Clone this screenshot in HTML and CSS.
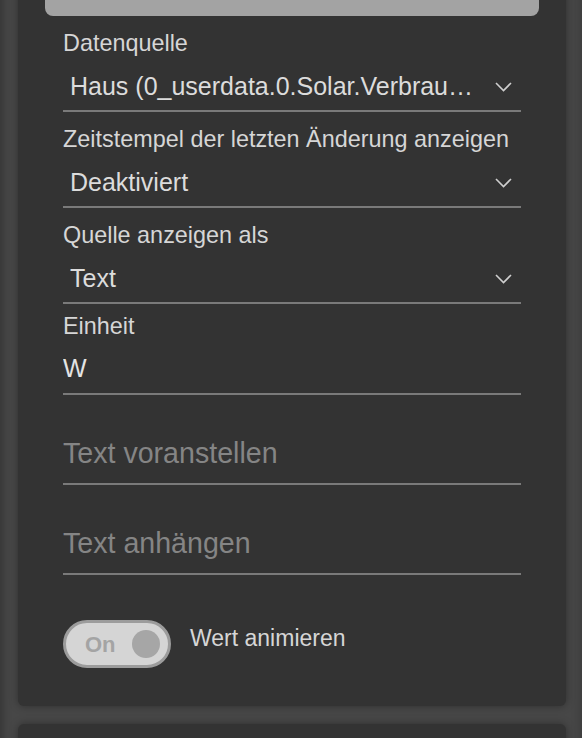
FILE: index.html
```html
<!DOCTYPE html>
<html lang="de">
<head>
    <meta charset="UTF-8">
    <meta name="viewport" content="width=device-width, initial-scale=1.0">
    <title>Widget Einstellungen</title>
    <link rel="stylesheet" href="styles.css">
</head>
<body>
<div class="panel">
    <div class="card">
        <button class="top-btn">Optionen</button>
        <div class="form">
            <div class="field">
                <label>Datenquelle</label>
                <div class="select">
                    <span class="value">Haus (0_userdata.0.Solar.Verbrauch.Haus)</span>
                    <svg class="chevron" width="17" height="10" viewBox="0 0 17 10"><path d="M1 1 L8.5 8.5 L16 1" fill="none" stroke="#cfcfcf" stroke-width="1.6"/></svg>
                </div>
            </div>
            <div class="field">
                <label>Zeitstempel der letzten Änderung anzeigen</label>
                <div class="select">
                    <span class="value">Deaktiviert</span>
                    <svg class="chevron" width="17" height="10" viewBox="0 0 17 10"><path d="M1 1 L8.5 8.5 L16 1" fill="none" stroke="#cfcfcf" stroke-width="1.6"/></svg>
                </div>
            </div>
            <div class="field">
                <label>Quelle anzeigen als</label>
                <div class="select">
                    <span class="value">Text</span>
                    <svg class="chevron" width="17" height="10" viewBox="0 0 17 10"><path d="M1 1 L8.5 8.5 L16 1" fill="none" stroke="#cfcfcf" stroke-width="1.6"/></svg>
                </div>
            </div>
            <div class="field field-text">
                <label>Einheit</label>
                <div class="input"><span class="value">W</span></div>
            </div>
            <div class="input input-empty"><span class="placeholder">Text voranstellen</span></div>
            <div class="input input-empty"><span class="placeholder">Text anhängen</span></div>

            <div class="switch-row">
                <div class="switch">
                    <span class="switch-text">On</span>
                    <span class="knob"></span>
                </div>
                <span class="switch-label">Wert animieren</span>
            </div>
        </div>
    </div>
    <div class="card card-next"></div>
</div>
</body>
</html>
```

FILE: styles.css
```css
body {
    margin: 0;
    background-color: #474747;
    font-family: "Liberation Sans", Arial, sans-serif;
    color: #d6d6d6;
    overflow: hidden;
}
.panel {
    min-height: 100vh;
    box-shadow: inset 9px 0 8px -6px rgba(0, 0, 0, 0.25), inset -9px 0 8px -6px rgba(0, 0, 0, 0.15);
    padding-bottom: 40px;
}
.card {
    background: #333333;
    margin: -40px 16px 0 18px;
    padding: 10px 27px 38px;
    border-radius: 6px;
    box-shadow: 0 0 9px rgba(0, 0, 0, 0.35);
}
.card-next {
    margin-top: 18px;
    height: 120px;
    padding: 0;
}
.top-btn {
    display: block;
    width: 100%;
    height: 46px;
    border: none;
    border-radius: 8px;
    background: #a3a3a3;
    color: #111;
    font-family: "Liberation Sans", Arial, sans-serif;
    font-size: 23px;
    text-align: left;
    padding: 0 0 12px 81px;
}
.form {
    padding: 0 18px;
}
.field {
    margin-top: 13px;
}
.field-text {
    margin-top: 8px;
}
.field label {
    display: block;
    height: 28px;
    line-height: 28px;
    font-size: 23.4px;
    color: #d6d6d6;
}
.select, .input {
    display: flex;
    align-items: center;
    height: 53px;
    border-bottom: 2px solid #7a7a7a;
    font-size: 25px;
}
.select {
    padding: 6px 9px 0 7px;
    box-sizing: content-box;
    height: 47px;
}
.input {
    padding-top: 4px;
    height: 49px;
}
.value {
    flex: 1;
    min-width: 0;
    white-space: nowrap;
    overflow: hidden;
    text-overflow: ellipsis;
    color: #dcdcdc;
}
.input .value {
    color: #e4e4e4;
}
.chevron {
    flex-shrink: 0;
    margin-left: 10px;
}
.input-empty {
    align-items: flex-end;
    height: 75px;
    padding: 0 0 13px;
}
.placeholder {
    font-size: 28.6px;
    color: #858585;
}
.switch-row {
    display: flex;
    align-items: flex-start;
    margin-top: 45px;
}
.switch {
    box-sizing: border-box;
    width: 108px;
    height: 48px;
    border: 3px solid #9c9c9c;
    border-radius: 24px;
    background: #d5d5d5;
    display: flex;
    align-items: center;
    justify-content: space-between;
    padding: 0 8px 0 19px;
}
.switch-text {
    font-size: 22px;
    font-weight: bold;
    color: #a4a4a4;
    margin-top: 2px;
}
.knob {
    width: 28px;
    height: 28px;
    border-radius: 50%;
    background: #a6a6a6;
}
.switch-label {
    font-size: 23px;
    margin: 5px 0 0 19px;
    color: #d6d6d6;
}
```
